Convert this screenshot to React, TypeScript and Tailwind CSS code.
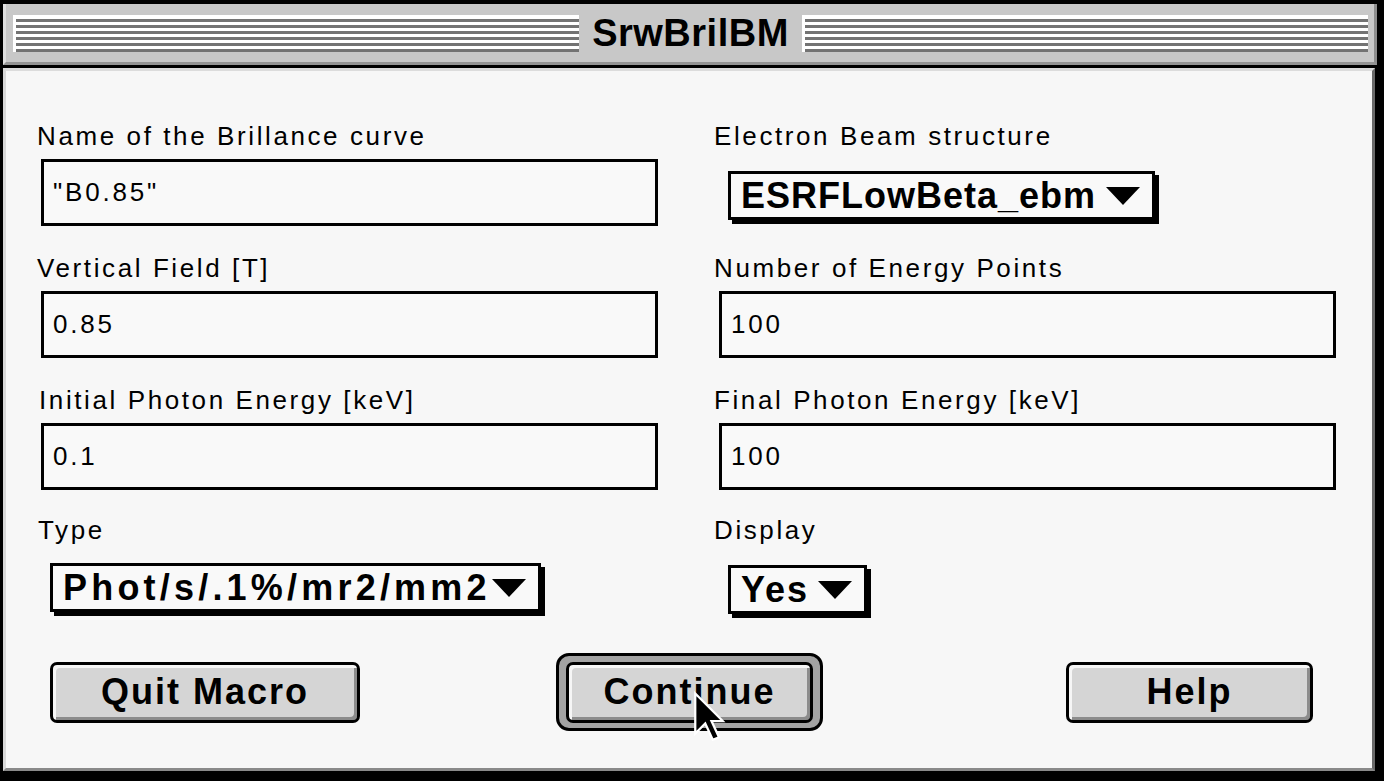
import React from "react";

const LBL = "h-[28px] leading-[28px] text-[26px] tracking-[2.6px] text-black whitespace-nowrap";
const FIELD =
  "h-[67px] w-[617px] border-[3px] border-black bg-[#f9f9f9] flex items-center pl-[9px] text-[26px] tracking-[2.8px] text-black";

function Triangle() {
  return (
    <svg width="34" height="18" viewBox="0 0 34 18" className="shrink-0">
      <polygon points="0,0 34,0 17,18" fill="#000" />
    </svg>
  );
}

function Popup({ text, w, extra }: { text: string; w: string; extra?: string }) {
  return (
    <div
      className={`${w} h-[49px] border-[3px] border-black bg-[#f9f9f9] shadow-[4px_4px_0_#000] flex items-center justify-between pl-[10px] pr-[12px] text-[36px] font-bold text-black leading-none ${extra ?? ""}`}
    >
      <span className="whitespace-nowrap">{text}</span>
      <Triangle />
    </div>
  );
}

function MacButton({ label, w }: { label: string; w: string }) {
  return (
    <div
      className={`${w} h-[61px] shrink-0 rounded-[7px] border-[3px] border-black bg-[#d5d5d5] shadow-[inset_3px_3px_0_#f6f6f6,inset_-3px_-3px_0_#8c8c8c] flex items-center justify-center text-[36px] font-bold tracking-[2px] text-black leading-none`}
    >
      {label}
    </div>
  );
}

function StripeBlock() {
  const stripes = [0, 1, 2, 3, 4, 5];
  return (
    <div className="flex-1 flex flex-col bg-white pt-[4px] pl-[3px]">
      {stripes.map((i) => (
        <div key={i} className="flex flex-col">
          <div className="h-[3px] bg-[#737373]" />
          {i < 5 ? <div className="h-[3px] bg-white" /> : null}
        </div>
      ))}
    </div>
  );
}

export default function App() {
  return (
    <div className="relative w-[1384px] h-[781px] bg-black pt-[4px] pl-[3px] pr-[7px] pb-[10px] flex flex-col font-['Liberation_Sans',Arial,sans-serif] overflow-hidden">
      {/* Title bar */}
      <div className="h-[61px] shrink-0 bg-[#c8c8c8] border-l-[3px] border-l-[#dedede] border-r-[3px] border-r-[#8e8e8e] border-b-[3px] border-b-[#949494] flex items-center pl-[7px] pr-[6px]">
        <div className="flex-1 flex items-center h-[38px]">
          <div className="flex-1 h-[37px] flex">
            <StripeBlock />
          </div>
          <div className="w-[223px] flex items-center justify-center text-[38px] font-bold tracking-[0.5px] text-black leading-none">
            SrwBrilBM
          </div>
          <div className="flex-1 h-[37px] flex">
            <StripeBlock />
          </div>
        </div>
      </div>

      {/* Content */}
      <div className="mt-[3px] mr-[2px] flex-1 bg-[#f7f7f7] border-t-[3px] border-t-[#dcdcdc] border-l-[3px] border-l-[#d8d8d8] border-r-[3px] border-r-[#6a6a6a] border-b-[3px] border-b-[#8a8a8a] pt-[51px] pl-[31px] flex flex-col">
        {/* Row 1 */}
        <div className="grid grid-cols-[677px_1fr] mb-[28px]">
          <div className="flex flex-col">
            <div className={LBL}>Name of the Brillance curve</div>
            <div className={`${FIELD} mt-[9px] ml-[4px]`}>"B0.85"</div>
          </div>
          <div className="flex flex-col">
            <div className={LBL}>Electron Beam structure</div>
            <Popup text="ESRFLowBeta_ebm" w="w-[427px]" extra="mt-[21px] ml-[14px] tracking-[1px]" />
          </div>
        </div>

        {/* Row 2 */}
        <div className="grid grid-cols-[677px_1fr] mb-[28px]">
          <div className="flex flex-col">
            <div className={LBL}>Vertical Field [T]</div>
            <div className={`${FIELD} mt-[9px] ml-[4px]`}>0.85</div>
          </div>
          <div className="flex flex-col">
            <div className={LBL}>Number of Energy Points</div>
            <div className={`${FIELD} mt-[9px] ml-[5px]`}>100</div>
          </div>
        </div>

        {/* Row 3 */}
        <div className="grid grid-cols-[677px_1fr] mb-[26px]">
          <div className="flex flex-col">
            <div className={`${LBL} ml-[2px]`}>Initial Photon Energy [keV]</div>
            <div className={`${FIELD} mt-[9px] ml-[4px]`}>0.1</div>
          </div>
          <div className="flex flex-col">
            <div className={LBL}>Final Photon Energy [keV]</div>
            <div className={`${FIELD} mt-[9px] ml-[5px]`}>100</div>
          </div>
        </div>

        {/* Row 4 */}
        <div className="grid grid-cols-[677px_1fr]">
          <div className="flex flex-col">
            <div className={`${LBL} ml-[1px]`}>Type</div>
            <Popup text="Phot/s/.1%/mr2/mm2" w="w-[491px]" extra="mt-[19px] ml-[13px] tracking-[4.2px]" />
          </div>
          <div className="flex flex-col">
            <div className={LBL}>Display</div>
            <Popup text="Yes" w="w-[139px]" extra="mt-[21px] ml-[14px] tracking-[2px]" />
          </div>
        </div>

        {/* Buttons */}
        <div className="mt-[39px] h-[78px] flex items-center">
          <div className="ml-[13px]">
            <MacButton label="Quit Macro" w="w-[310px]" />
          </div>
          <div className="ml-[196px] w-[267px] h-[78px] shrink-0 rounded-[13px] border-[3px] border-black bg-[#a3a3a3] p-[6px] flex items-center justify-center">
            <MacButton label="Continue" w="w-[247px]" />
          </div>
          <div className="ml-[243px]">
            <MacButton label="Help" w="w-[247px]" />
          </div>
        </div>
      </div>

      {/* Mouse cursor */}
      <svg
        className="absolute left-[692px] top-[691px]"
        width="34"
        height="50"
        viewBox="-1 -1 13 20"
      >
        <polygon
          points="0,0 0,16 4,12 7,18.5 9.5,17.5 6.5,11 11,11"
          fill="#000"
          stroke="#fff"
          strokeWidth="0.9"
          strokeLinejoin="miter"
        />
      </svg>
    </div>
  );
}
